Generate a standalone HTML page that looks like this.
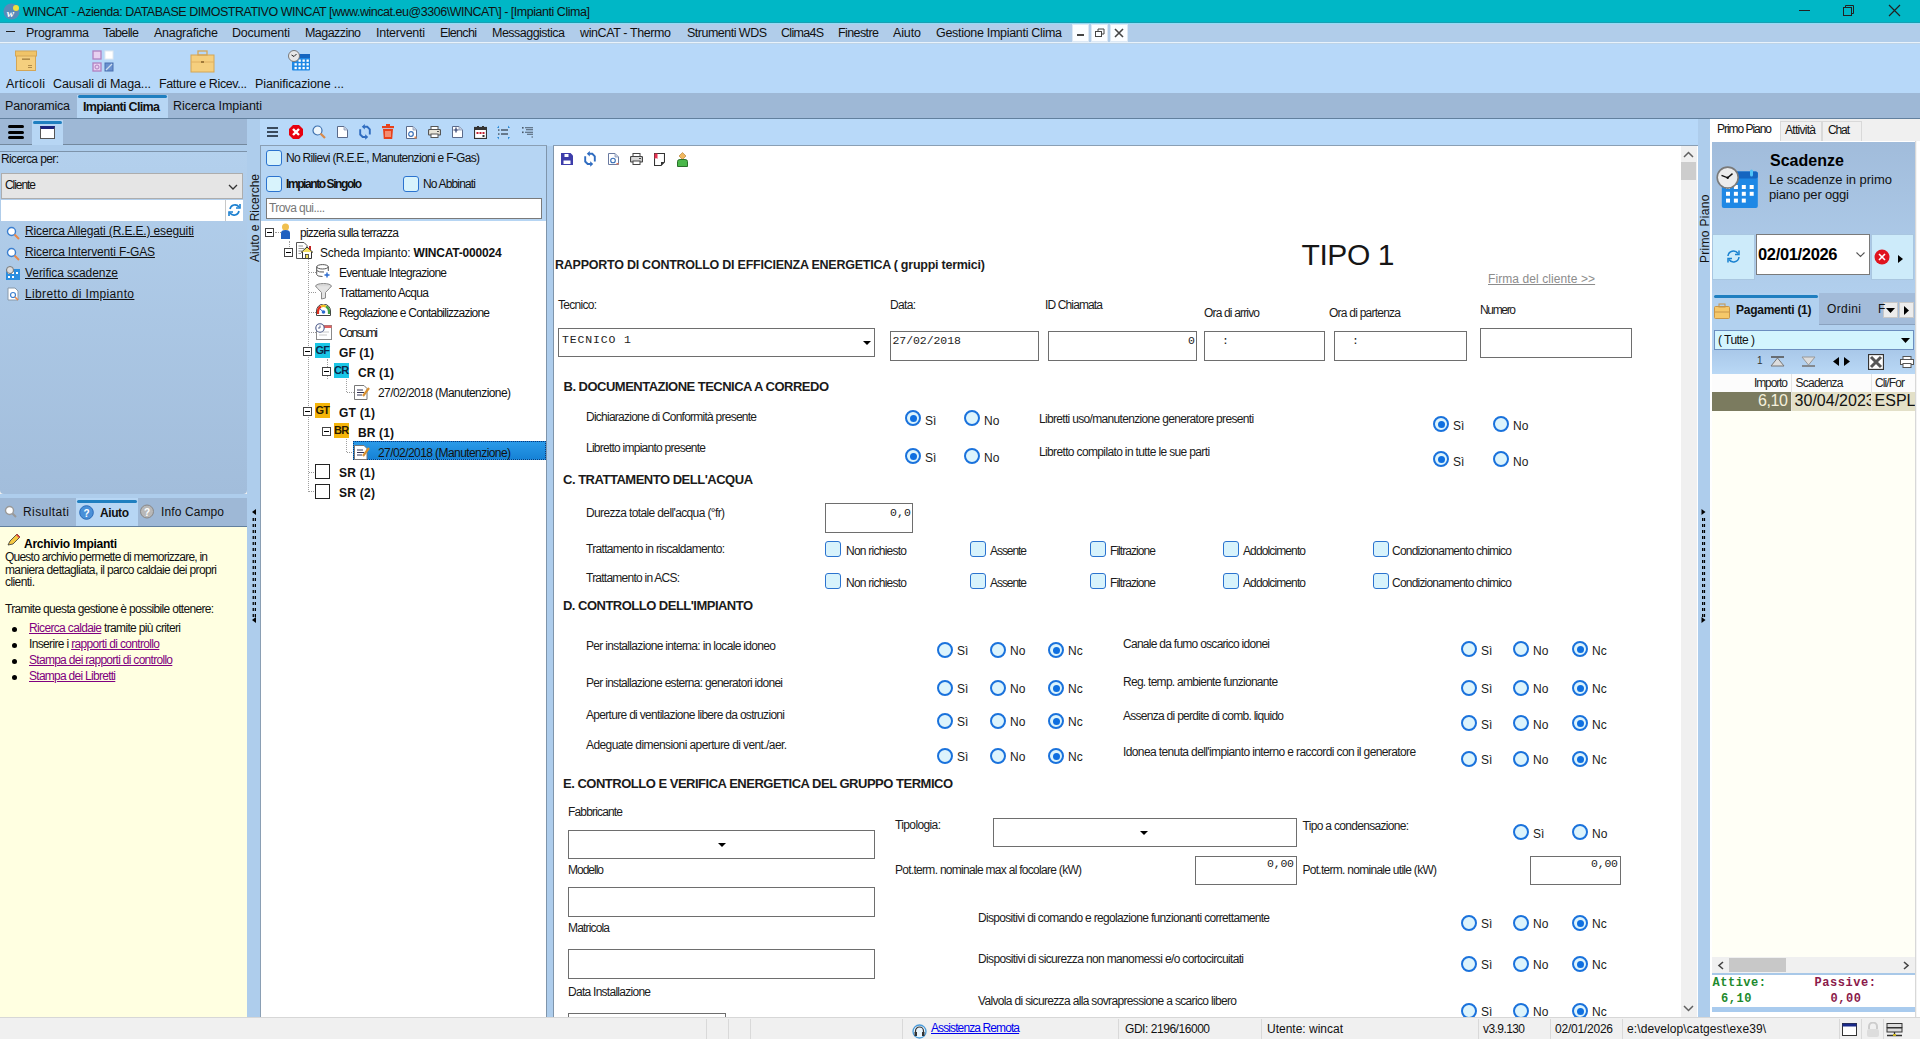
<!DOCTYPE html><html><head><meta charset="utf-8"><style>
html,body{margin:0;padding:0;width:1920px;height:1039px;overflow:hidden;background:#f0f0f0;position:relative;font-family:"Liberation Sans",sans-serif;}
.t{position:absolute;white-space:nowrap;line-height:0;color:#000;}
.r{position:absolute;box-sizing:border-box;}
</style></head><body>
<div class="r" style="left:0px;top:0px;width:1920px;height:22px;background:#00b7c6"></div>
<div class="r" style="left:0px;top:22px;width:1920px;height:20px;background:#b1cdea"></div>
<div class="r" style="left:0px;top:42px;width:1920px;height:1px;background:#e8f2fb"></div>
<div class="r" style="left:0px;top:22px;width:1920px;height:1px;background:#1a9fb2"></div>
<div class="r" style="left:0px;top:23px;width:1920px;height:1px;background:#94dcf6"></div>
<div class="r" style="left:0px;top:43px;width:1920px;height:50px;background:#b7d8f9"></div>
<div class="r" style="left:0px;top:43px;width:1920px;height:1px;background:#bdd4e8"></div>
<div class="r" style="left:0px;top:93px;width:1920px;height:25px;background:#9eb8d6"></div>
<div class="r" style="left:0px;top:118px;width:1920px;height:1px;background:#62809e"></div>
<div class="r" style="left:77px;top:95px;width:91px;height:23px;background:#b7d6f4"></div>
<div class="r" style="left:78px;top:95px;width:89px;height:3px;background:#1f7fc0;border-radius:2px"></div>
<div class="r" style="left:0px;top:119px;width:247px;height:26px;background:#9eb8d6"></div>
<div class="r" style="left:0px;top:144px;width:247px;height:1px;background:#73889d"></div>
<div class="r" style="left:0px;top:145px;width:247px;height:6px;background:#aecdec"></div>
<div class="r" style="left:0px;top:151px;width:247px;height:1px;background:#7d93aa"></div>
<div class="r" style="left:0px;top:152px;width:247px;height:342px;background:linear-gradient(#b3d0ed,#a2bddb);border-radius:0 0 4px 4px"></div>
<div class="r" style="left:0px;top:494px;width:247px;height:4px;background:#aecdec"></div>
<div class="r" style="left:0px;top:498px;width:247px;height:28px;background:#9eb8d6"></div>
<div class="r" style="left:0px;top:526px;width:247px;height:1px;background:#62809e"></div>
<div class="r" style="left:0px;top:527px;width:247px;height:490px;background:#ffffe1"></div>
<div class="r" style="left:32px;top:120px;width:31px;height:25px;background:#b7d6f4"></div>
<div class="r" style="left:33px;top:121px;width:29px;height:3px;background:#1f7fc0;border-radius:2px"></div>
<div class="r" style="left:76px;top:498px;width:62px;height:28px;background:#b7d6f4"></div>
<div class="r" style="left:77px;top:500px;width:60px;height:3px;background:#1f7fc0;border-radius:2px"></div>
<div class="r" style="left:247px;top:119px;width:13px;height:898px;background:#aecdec"></div>
<div class="r" style="left:260px;top:146px;width:1px;height:871px;background:#8a9fb4"></div>
<div class="r" style="left:260px;top:119px;width:1438px;height:27px;background:#b8d9f9"></div>
<div class="r" style="left:260px;top:145px;width:287px;height:1px;background:#8a9fb4"></div>
<div class="r" style="left:261px;top:146px;width:285px;height:75px;background:#b6d5f3"></div>
<div class="r" style="left:261px;top:221px;width:285px;height:796px;background:#fff"></div>
<div class="r" style="left:546px;top:146px;width:1px;height:871px;background:#7f95ab"></div>
<div class="r" style="left:547px;top:146px;width:6px;height:871px;background:#aecdec"></div>
<div class="r" style="left:553px;top:146px;width:1px;height:871px;background:#7f95ab"></div>
<div class="r" style="left:553px;top:145px;width:1145px;height:1px;background:#8a9fb4"></div>
<div class="r" style="left:554px;top:146px;width:1127px;height:871px;background:#fff"></div>
<div class="r" style="left:1681px;top:146px;width:16px;height:871px;background:#f0f0f0"></div>
<div class="r" style="left:1697px;top:146px;width:1px;height:871px;background:#fff"></div>
<div class="r" style="left:1681px;top:162px;width:15px;height:18px;background:#cdcdcd"></div>
<div class="r" style="left:1698px;top:119px;width:12px;height:898px;background:#aecdec"></div>
<div class="r" style="left:1710px;top:119px;width:210px;height:898px;background:#f0f0f0"></div>
<svg class="r" style="left:3px;top:3px" width="17" height="17" viewBox="0 0 17 17"><circle cx="8.5" cy="8.5" r="8" fill="#5a8ab8"/><circle cx="13" cy="5" r="3" fill="#f0e040"/><text x="7.5" y="14" font-size="11" font-weight="bold" fill="#fff" text-anchor="middle" font-family="Liberation Serif" font-style="italic">w</text></svg>
<div class="r" style="left:1799px;top:10px;width:11px;height:1px;background:#222"></div>
<svg class="r" style="left:1843px;top:5px" width="12" height="12" viewBox="0 0 12 12"><rect x="0.5" y="2.5" width="8" height="8" fill="none" stroke="#222"/><path d="M2.5 2.5V0.5H10.5V8.5H8.5" fill="none" stroke="#222"/></svg>
<svg class="r" style="left:1888px;top:4px" width="13" height="13" viewBox="0 0 13 13"><path d="M1 1L12 12M12 1L1 12" stroke="#222" stroke-width="1.2"/></svg>
<div class="r" style="left:6px;top:31px;width:9px;height:1.3px;background:#222"></div>
<div class="r" style="left:1072px;top:24px;width:17px;height:18px;background:#fbfdff;border:1px solid #dce8f4"></div>
<div class="r" style="left:1091px;top:24px;width:17px;height:18px;background:#fbfdff;border:1px solid #dce8f4"></div>
<div class="r" style="left:1110px;top:24px;width:18px;height:18px;background:#fbfdff;border:1px solid #dce8f4"></div>
<div class="r" style="left:1077px;top:34px;width:7px;height:2px;background:#444"></div>
<svg class="r" style="left:1095px;top:28px" width="10" height="10" viewBox="0 0 10 10"><rect x="0.5" y="3.5" width="6" height="5" fill="none" stroke="#444"/><path d="M3 3.5V1H9V6H6.5" fill="none" stroke="#444"/></svg>
<svg class="r" style="left:1114px;top:28px" width="10" height="10" viewBox="0 0 10 10"><path d="M1 1L9 9M9 1L1 9" stroke="#444" stroke-width="1.6"/></svg>
<svg class="r" style="left:15px;top:50px" width="22" height="21" viewBox="0 0 22 21"><rect x="1.5" y="5.5" width="19" height="15" fill="#f5cf7e" stroke="#d4a656"/><rect x="0.5" y="1" width="21" height="5" fill="#f0c468" stroke="#d4a656"/><rect x="7" y="8.5" width="8" height="1.3" fill="#a07a3a"/><path d="M13 15.5H17M13 17.5H17" stroke="#a07a3a" stroke-width="0.8"/></svg>
<svg class="r" style="left:92px;top:50px" width="23" height="23" viewBox="0 0 23 23"><rect x="1" y="1" width="8" height="8" fill="#e8d0f0" stroke="#b080c0" stroke-width="1.3"/><rect x="13" y="1" width="8" height="8" fill="#fff" stroke="#e0e8f0"/><rect x="1" y="13" width="8" height="8" fill="#e8d0f0" stroke="#b080c0" stroke-width="1.3"/><circle cx="5" cy="17" r="2" fill="none" stroke="#b080c0"/><rect x="13" y="13" width="8" height="8" fill="#6a90d0" stroke="#4a70b0"/><path d="M14 20L20 14" stroke="#cde" stroke-width="1.2"/></svg>
<svg class="r" style="left:190px;top:50px" width="25" height="23" viewBox="0 0 25 23"><rect x="1" y="5" width="23" height="17" fill="#f5cf7e" stroke="#d4a656"/><rect x="8" y="1" width="9" height="4" fill="none" stroke="#d4a656" stroke-width="1.3"/><path d="M1 12H24" stroke="#e0b060"/><rect x="11" y="11" width="3" height="2" fill="#a07a3a"/></svg>
<svg class="r" style="left:288px;top:50px" width="24" height="23" viewBox="0 0 24 23"><rect x="4" y="4" width="18" height="16.5" rx="1" fill="#1e88e5"/><rect x="4" y="4" width="18" height="4" fill="#1565c0"/><rect x="10.5" y="9.5" width="2.3" height="2.3" fill="#fff"/><rect x="14.5" y="9.5" width="2.3" height="2.3" fill="#fff"/><rect x="18.5" y="9.5" width="2.3" height="2.3" fill="#fff"/><rect x="6.5" y="13.2" width="2.3" height="2.3" fill="#fff"/><rect x="10.5" y="13.2" width="2.3" height="2.3" fill="#fff"/><rect x="14.5" y="13.2" width="2.3" height="2.3" fill="#fff"/><rect x="18.5" y="13.2" width="2.3" height="2.3" fill="#fff"/><rect x="6.5" y="16.9" width="2.3" height="2.3" fill="#fff"/><rect x="10.5" y="16.9" width="2.3" height="2.3" fill="#fff"/><rect x="14.5" y="16.9" width="2.3" height="2.3" fill="#fff"/><rect x="18.5" y="16.9" width="2.3" height="2.3" fill="#fff"/><circle cx="6" cy="6" r="5.5" fill="#e8e8e8" stroke="#777" stroke-width="1"/><path d="M3.5 5L6 6.5L8.5 4" stroke="#222" stroke-width="1" fill="none"/></svg>
<div class="r" style="left:1px;top:173px;width:242px;height:26px;border:1px solid #adadad;background:#e5e5e5"></div>
<svg class="r" style="left:228px;top:184px" width="10" height="6" viewBox="0 0 10 6"><path d="M1 1L5 5L9 1" stroke="#333" stroke-width="1.3" fill="none"/></svg>
<div class="r" style="left:1px;top:200px;width:224px;height:21px;border:1px solid #ffffff;background:#fff"></div>
<div class="r" style="left:225px;top:200px;width:18px;height:21px;background:#fff;border-left:1px solid #c8c8c8"></div>
<svg class="r" style="left:227px;top:202px" width="15" height="16" viewBox="0 0 15 16"><path d="M3 7A5 5 0 0 1 12 5" stroke="#1a7fd0" stroke-width="1.6" fill="none"/><path d="M13 2V6H9" stroke="#1a7fd0" stroke-width="1.6" fill="none"/><path d="M12 9A5 5 0 0 1 3 11" stroke="#1a7fd0" stroke-width="1.6" fill="none"/><path d="M2 14V10H6" stroke="#1a7fd0" stroke-width="1.6" fill="none"/></svg>
<svg class="r" style="left:6px;top:226px" width="14" height="14" viewBox="0 0 14 14"><circle cx="5.5" cy="5.5" r="4" fill="#fff" stroke="#3b7fd0" stroke-width="1.4"/><path d="M8.5 8.5L13 13" stroke="#e8884a" stroke-width="2"/></svg>
<svg class="r" style="left:6px;top:247px" width="14" height="14" viewBox="0 0 14 14"><circle cx="5.5" cy="5.5" r="4" fill="#fff" stroke="#3b7fd0" stroke-width="1.4"/><path d="M8.5 8.5L13 13" stroke="#e8884a" stroke-width="2"/></svg>
<svg class="r" style="left:6px;top:266px" width="14" height="14" viewBox="0 0 14 14"><rect x="0" y="3" width="14" height="11" fill="#2a8ee0"/><rect x="2" y="6" width="2" height="2" fill="#fff"/><rect x="6" y="6" width="2" height="2" fill="#fff"/><rect x="10" y="6" width="2" height="2" fill="#fff"/><rect x="2" y="10" width="2" height="2" fill="#fff"/><rect x="6" y="10" width="2" height="2" fill="#fff"/><circle cx="4" cy="4" r="3.5" fill="#ddd" stroke="#777"/></svg>
<svg class="r" style="left:7px;top:287px" width="13" height="14" viewBox="0 0 13 14"><path d="M1 1H8L11 4V13H1Z" fill="#fff" stroke="#8899aa"/><circle cx="6" cy="8" r="2.5" fill="none" stroke="#3b7fd0" stroke-width="1.2"/><path d="M8 10L11 13" stroke="#e8884a" stroke-width="1.6"/></svg>
<div class="r" style="left:8px;top:125px;width:16px;height:3px;background:#000;border-radius:1.5px"></div>
<div class="r" style="left:8px;top:130.5px;width:16px;height:3px;background:#000;border-radius:1.5px"></div>
<div class="r" style="left:8px;top:136px;width:16px;height:3px;background:#000;border-radius:1.5px"></div>
<div class="r" style="left:40px;top:126px;width:15px;height:13px;border:1px solid #555;background:#fff;border-top:3px solid #1a237e"></div>
<svg class="r" style="left:4px;top:505px" width="13" height="14" viewBox="0 0 13 14"><circle cx="5.5" cy="5.5" r="4" fill="#fff" stroke="#999" stroke-width="1.4"/><path d="M8.5 8.5L12 12" stroke="#999" stroke-width="2"/></svg>
<svg class="r" style="left:79px;top:505px" width="15" height="15" viewBox="0 0 15 15"><circle cx="7.5" cy="7.5" r="6.8" fill="#4a90d8" stroke="#2a6ab8"/><text x="7.5" y="11.5" font-size="10" font-weight="bold" fill="#fff" text-anchor="middle" font-family="Liberation Sans">?</text></svg>
<svg class="r" style="left:140px;top:504px" width="14" height="15" viewBox="0 0 14 15"><circle cx="7" cy="7.5" r="6.5" fill="#b8b8b8" stroke="#888"/><text x="7" y="11.5" font-size="10" font-weight="bold" fill="#fff" text-anchor="middle" font-family="Liberation Sans">?</text></svg>
<svg class="r" style="left:6px;top:533px" width="15" height="14" viewBox="0 0 15 14"><path d="M2 12L4 8L11 1L14 4L7 11Z" fill="#f5c842" stroke="#333" stroke-width="0.8"/><path d="M11 1L14 4L13 5L10 2Z" fill="#e04040"/></svg>
<svg class="r" style="left:251px;top:507px" width="6" height="118" viewBox="0 0 6 118"><path d="M5 2L1 5L5 8Z" fill="#000"/><rect x="1.6" y="11" width="1.3" height="3" fill="#000"/><rect x="3.7" y="11" width="1.3" height="3" fill="#000"/><rect x="1.6" y="17" width="1.3" height="3" fill="#000"/><rect x="3.7" y="17" width="1.3" height="3" fill="#000"/><rect x="1.6" y="23" width="1.3" height="3" fill="#000"/><rect x="3.7" y="23" width="1.3" height="3" fill="#000"/><rect x="1.6" y="29" width="1.3" height="3" fill="#000"/><rect x="3.7" y="29" width="1.3" height="3" fill="#000"/><rect x="1.6" y="35" width="1.3" height="3" fill="#000"/><rect x="3.7" y="35" width="1.3" height="3" fill="#000"/><rect x="1.6" y="41" width="1.3" height="3" fill="#000"/><rect x="3.7" y="41" width="1.3" height="3" fill="#000"/><rect x="1.6" y="47" width="1.3" height="3" fill="#000"/><rect x="3.7" y="47" width="1.3" height="3" fill="#000"/><rect x="1.6" y="53" width="1.3" height="3" fill="#000"/><rect x="3.7" y="53" width="1.3" height="3" fill="#000"/><rect x="1.6" y="59" width="1.3" height="3" fill="#000"/><rect x="3.7" y="59" width="1.3" height="3" fill="#000"/><rect x="1.6" y="65" width="1.3" height="3" fill="#000"/><rect x="3.7" y="65" width="1.3" height="3" fill="#000"/><rect x="1.6" y="71" width="1.3" height="3" fill="#000"/><rect x="3.7" y="71" width="1.3" height="3" fill="#000"/><rect x="1.6" y="77" width="1.3" height="3" fill="#000"/><rect x="3.7" y="77" width="1.3" height="3" fill="#000"/><rect x="1.6" y="83" width="1.3" height="3" fill="#000"/><rect x="3.7" y="83" width="1.3" height="3" fill="#000"/><rect x="1.6" y="89" width="1.3" height="3" fill="#000"/><rect x="3.7" y="89" width="1.3" height="3" fill="#000"/><rect x="1.6" y="95" width="1.3" height="3" fill="#000"/><rect x="3.7" y="95" width="1.3" height="3" fill="#000"/><rect x="1.6" y="101" width="1.3" height="3" fill="#000"/><rect x="3.7" y="101" width="1.3" height="3" fill="#000"/><rect x="1.6" y="107" width="1.3" height="3" fill="#000"/><rect x="3.7" y="107" width="1.3" height="3" fill="#000"/><path d="M5 110L1 113L5 116Z" fill="#000"/></svg>
<div class="t" style="left:255px;top:262px;font-size:12px;color:#111;transform:rotate(-90deg);transform-origin:0 0;letter-spacing:0px">Aiuto e Ricerche</div>
<div class="r" style="left:266px;top:150px;width:16px;height:16px;border:1.6px solid #2b73cf;border-radius:3px;background:#d8f3fc"></div>
<div class="r" style="left:266px;top:176px;width:16px;height:16px;border:1.6px solid #2b73cf;border-radius:3px;background:#d8f3fc"></div>
<div class="r" style="left:403px;top:176px;width:16px;height:16px;border:1.6px solid #2b73cf;border-radius:3px;background:#d8f3fc"></div>
<div class="r" style="left:266px;top:198px;width:276px;height:21px;border:1px solid #7a7a7a;background:#fff"></div>
<div class="r" style="left:267px;top:127px;width:11px;height:2px;background:#3a4a5c"></div>
<div class="r" style="left:267px;top:131px;width:11px;height:2px;background:#3a4a5c"></div>
<div class="r" style="left:267px;top:135px;width:11px;height:2px;background:#3a4a5c"></div>
<svg class="r" style="left:289px;top:125px" width="14" height="14" viewBox="0 0 14 14"><path d="M4 0H10L14 4V10L10 14H4L0 10V4Z" fill="#e8000e"/><path d="M4 4L10 10M10 4L4 10" stroke="#fff" stroke-width="2.4"/></svg>
<svg class="r" style="left:312px;top:125px" width="14" height="14" viewBox="0 0 14 14"><circle cx="5.5" cy="5.5" r="4.5" fill="#eef6fc" stroke="#3b6fae" stroke-width="1.2"/><path d="M8.5 8.5L13 13" stroke="#d88a4a" stroke-width="2.2"/></svg>
<svg class="r" style="left:337px;top:126px" width="11" height="12" viewBox="0 0 11 12"><path d="M0.5 0.5H7L10.5 4V11.5H0.5Z" fill="#fff" stroke="#5a6a8a"/><path d="M7 0.5V4H10.5" fill="#c8d0e0" stroke="#8a9ab8" stroke-width="0.8"/></svg>
<svg class="r" style="left:358px;top:123px" width="14" height="18" viewBox="0 0 14 18"><path d="M11.8 11.5V6.3L9.3 3.8H6.2M2.2 6.3V11.5L4.7 14H7.8" stroke="#2f6cc0" stroke-width="1.9" fill="none"/><path d="M3.8 3.8L6.8 1V6.6Z M10.2 14L7.2 11.2V16.8Z" fill="#2f6cc0"/></svg>
<svg class="r" style="left:382px;top:124px" width="12" height="15" viewBox="0 0 12 15"><rect x="4" y="0" width="4" height="2" fill="#e8401a"/><rect x="0" y="2" width="12" height="2.2" fill="#e8401a"/><path d="M1 5H11L10.2 15H1.8Z" fill="#e8401a"/><path d="M4 7V13M6 7V13M8 7V13" stroke="#ffd8c8" stroke-width="1"/></svg>
<svg class="r" style="left:406px;top:126px" width="11" height="13" viewBox="0 0 11 13"><path d="M0.5 0.5H7L10.5 4V12.5H0.5Z" fill="#fff" stroke="#5a6a8a"/><path d="M7 0.5V4H10.5" fill="#c8d0e0" stroke="#8a9ab8" stroke-width="0.8"/><circle cx="5" cy="8" r="2.3" fill="none" stroke="#3a70b8" stroke-width="1.2"/><rect x="8.5" y="10.5" width="2" height="2" fill="#e8884a"/></svg>
<svg class="r" style="left:428px;top:126px" width="13" height="12" viewBox="0 0 13 12"><rect x="3" y="0.5" width="7" height="3" fill="#fff" stroke="#555"/><rect x="0.5" y="3.5" width="12" height="5.5" rx="1" fill="#e8e4d8" stroke="#555" stroke-width="1.2"/><rect x="3" y="8" width="7" height="3.5" fill="#fff" stroke="#555"/><rect x="9" y="5" width="2" height="1" fill="#555"/></svg>
<svg class="r" style="left:452px;top:126px" width="11" height="12" viewBox="0 0 11 12"><path d="M0.5 0.5H7L10.5 4V11.5H0.5Z" fill="#fff" stroke="#5a6a8a"/><path d="M7 0.5V4H10.5" fill="#c8d0e0" stroke="#8a9ab8" stroke-width="0.8"/><path d="M1.5 4H6.5M4 1.5V6.5" stroke="#2a3a6a" stroke-width="1.2"/></svg>
<svg class="r" style="left:474px;top:126px" width="13" height="13" viewBox="0 0 13 13"><rect x="0.5" y="1.5" width="12" height="11" fill="#fff" stroke="#333" stroke-width="1.2"/><rect x="0.5" y="1.5" width="12" height="2.5" fill="#333"/><rect x="3" y="0" width="2" height="2" fill="#333"/><rect x="8" y="0" width="2" height="2" fill="#333"/><rect x="2.5" y="6" width="2" height="2" fill="#c02030"/><rect x="5.5" y="6" width="2" height="2" fill="#c02030"/><rect x="8.5" y="6" width="2" height="2" fill="#c02030"/><rect x="8.5" y="9" width="2" height="2" fill="#333"/></svg>
<svg class="r" style="left:497px;top:125px" width="13" height="15" viewBox="0 0 13 15"><path d="M4 5H11M4 9H11" stroke="#4a5a6a" stroke-width="1.3"/><rect x="1" y="4.3" width="1.5" height="1.5" fill="#4a5a6a"/><rect x="1" y="8.3" width="1.5" height="1.5" fill="#4a5a6a"/><path d="M0 3L2 0.5L2 3Z M13 3L11 0.5L11 3Z M0 12L2 14.5L2 12Z M13 12L11 14.5L11 12Z" fill="#2a8ad8"/></svg>
<svg class="r" style="left:522px;top:125px" width="12" height="14" viewBox="0 0 12 14"><rect x="0" y="2" width="1.6" height="1.6" fill="#4a5a6a"/><rect x="0" y="6.5" width="1.6" height="1.6" fill="#4a5a6a"/><path d="M3 2.8H11M4 4.8H11M3 7.3H11M5 9.3H11M9.5 12H11" stroke="#4a5a6a" stroke-width="1.1"/></svg>
<div class="r" style="left:269px;top:237px;width:1px;height:0px;"></div>
<div class="r" style="left:265px;top:228px;width:9px;height:9px;border:1px solid #444;background:#fff"></div>
<div class="r" style="left:267px;top:232px;width:5px;height:1px;background:#000"></div>
<div class="r" style="left:275px;top:232px;width:6px;height:1px;border-top:1px dotted #999"></div>
<svg class="r" style="left:280px;top:223px" width="11" height="17" viewBox="0 0 11 17"><circle cx="5.5" cy="4" r="3.5" fill="#f0c050"/><path d="M1 16V10Q1 7 5.5 7Q10 7 10 10V16Z" fill="#2060c0"/></svg>
<div class="r" style="left:289px;top:241px;width:1px;height:8px;border-left:1px dotted #a0a0a0"></div>
<div class="r" style="left:284px;top:248px;width:9px;height:9px;border:1px solid #444;background:#fff"></div>
<div class="r" style="left:286px;top:252px;width:5px;height:1px;background:#000"></div>
<svg class="r" style="left:296px;top:242px" width="17" height="17" viewBox="0 0 17 17"><path d="M0.5 0.5H8L11 3.5V16.5H0.5Z" fill="#fff" stroke="#555"/><path d="M2.5 4H7M2.5 6.5H8M2.5 9H6M2.5 11.5H5" stroke="#888" stroke-width="0.9"/><path d="M5 10.5L11 5L17 10.5" fill="#f4e060" stroke="#333" stroke-width="1"/><path d="M6.5 10V16.5H15.5V10" fill="#fff" stroke="#333" stroke-width="1"/><rect x="9.5" y="12.5" width="3" height="4" fill="#f4e060" stroke="#333" stroke-width="0.8"/><rect x="13" y="4" width="2" height="4" fill="#c02020"/></svg>
<div class="r" style="left:308px;top:259px;width:1px;height:233px;border-left:1px dotted #a0a0a0"></div>
<div class="r" style="left:309px;top:272px;width:7px;height:1px;border-top:1px dotted #999"></div>
<div class="r" style="left:309px;top:292px;width:7px;height:1px;border-top:1px dotted #999"></div>
<div class="r" style="left:309px;top:312px;width:7px;height:1px;border-top:1px dotted #999"></div>
<div class="r" style="left:309px;top:332px;width:7px;height:1px;border-top:1px dotted #999"></div>
<div class="r" style="left:309px;top:472px;width:7px;height:1px;border-top:1px dotted #999"></div>
<div class="r" style="left:309px;top:491px;width:7px;height:1px;border-top:1px dotted #999"></div>
<svg class="r" style="left:316px;top:264px" width="14" height="14" viewBox="0 0 14 14"><ellipse cx="6.5" cy="2.8" rx="5.8" ry="2.2" fill="#fff" stroke="#555"/><path d="M0.7 2.8V10.5Q0.7 12.5 6.5 12.5" fill="none" stroke="#555"/><path d="M12.3 2.8V7" stroke="#555"/><path d="M0.7 6.5Q3 8.5 8 8" stroke="#555" fill="none"/><path d="M8.5 11H13.5M11 8.5V13.5" stroke="#2a6ad0" stroke-width="1.4"/></svg>
<svg class="r" style="left:315px;top:283px" width="17" height="17" viewBox="0 0 17 17"><ellipse cx="8.5" cy="3" rx="7.8" ry="2.5" fill="#d8d8d8" stroke="#8a8a8a"/><path d="M0.7 3.2Q2 5 6.5 9.5V16L10.5 15V9.5Q15 5 16.3 3.2" fill="#e4e4e4" stroke="#8a8a8a"/></svg>
<svg class="r" style="left:316px;top:304px" width="15" height="12" viewBox="0 0 15 12"><path d="M0.5 11.5V7A7 7 0 0 1 14.5 7V11.5Z" fill="#fff" stroke="#444"/><path d="M2 10V7.5A5.5 5.5 0 0 1 5 2.5" stroke="#e03020" stroke-width="2.2" fill="none"/><path d="M5 2.5A5.5 5.5 0 0 1 10 2.5" stroke="#f0c020" stroke-width="2.2" fill="none"/><path d="M10 2.5A5.5 5.5 0 0 1 13 7.5V10" stroke="#40a040" stroke-width="2.2" fill="none"/><circle cx="7.5" cy="8" r="1.8" fill="#2a6ad0"/><path d="M7.5 8L4 5" stroke="#2a6ad0" stroke-width="1"/></svg>
<svg class="r" style="left:315px;top:323px" width="17" height="17" viewBox="0 0 17 17"><rect x="1.5" y="2.5" width="15" height="14" fill="#fff" stroke="#8a8a8a"/><rect x="1.5" y="2.5" width="15" height="2.5" fill="#e06060"/><path d="M4 9H14M4 12H12" stroke="#c8c8c8"/><circle cx="5" cy="5" r="4.2" fill="#fff" stroke="#4a5a8a" stroke-width="1.1"/><path d="M5 2.5V5H3" stroke="#4a5a8a" stroke-width="0.9" fill="none"/></svg>
<div class="r" style="left:303px;top:347px;width:9px;height:9px;border:1px solid #444;background:#fff"></div>
<div class="r" style="left:305px;top:351px;width:5px;height:1px;background:#000"></div>
<div class="r" style="left:315px;top:343px;width:15px;height:15px;background:#1ac6e6"></div>
<div class="t" style="left:315.5px;top:350px;font-size:11px;font-weight:bold;color:#0a2a4a;letter-spacing:-0.8px">GF</div>
<div class="r" style="left:327px;top:359px;width:1px;height:20px;border-left:1px dotted #a0a0a0"></div>
<div class="r" style="left:322px;top:367px;width:9px;height:9px;border:1px solid #444;background:#fff"></div>
<div class="r" style="left:324px;top:371px;width:5px;height:1px;background:#000"></div>
<div class="r" style="left:334px;top:363px;width:15px;height:15px;background:#1ac6e6"></div>
<div class="t" style="left:334px;top:370px;font-size:11px;font-weight:bold;color:#0a2a4a;letter-spacing:-0.8px">CR</div>
<div class="r" style="left:346px;top:379px;width:1px;height:13px;border-left:1px dotted #a0a0a0"></div>
<div class="r" style="left:347px;top:392px;width:7px;height:1px;border-top:1px dotted #999"></div>
<svg class="r" style="left:354px;top:384px" width="16" height="16" viewBox="0 0 16 16"><path d="M0.5 1.5H10L13 4.5V15.5H0.5Z" fill="#fff" stroke="#777"/><path d="M3 6H9M3 8.5H10M3 11H8" stroke="#335" stroke-width="1"/><path d="M9 12L15 4" stroke="#d89030" stroke-width="2.2"/></svg>
<div class="r" style="left:303px;top:407px;width:9px;height:9px;border:1px solid #444;background:#fff"></div>
<div class="r" style="left:305px;top:411px;width:5px;height:1px;background:#000"></div>
<div class="r" style="left:315px;top:403px;width:15px;height:15px;background:#f5b50a"></div>
<div class="t" style="left:315.5px;top:410px;font-size:11px;font-weight:bold;color:#2a1a00;letter-spacing:-0.8px">GT</div>
<div class="r" style="left:322px;top:427px;width:9px;height:9px;border:1px solid #444;background:#fff"></div>
<div class="r" style="left:324px;top:431px;width:5px;height:1px;background:#000"></div>
<div class="r" style="left:334px;top:423px;width:15px;height:15px;background:#f5b50a"></div>
<div class="t" style="left:334px;top:430px;font-size:11px;font-weight:bold;color:#2a1a00;letter-spacing:-0.8px">BR</div>
<div class="r" style="left:346px;top:439px;width:1px;height:13px;border-left:1px dotted #a0a0a0"></div>
<div class="r" style="left:347px;top:452px;width:7px;height:1px;border-top:1px dotted #999"></div>
<div class="r" style="left:353px;top:441px;width:193px;height:19px;background:linear-gradient(#2a9ae8,#1682d6);border:1px dotted #0a3a7a"></div>
<svg class="r" style="left:354px;top:444px" width="16" height="16" viewBox="0 0 16 16"><path d="M0.5 1.5H10L13 4.5V15.5H0.5Z" fill="#fff" stroke="#777"/><path d="M3 6H9M3 8.5H10M3 11H8" stroke="#335" stroke-width="1"/><path d="M9 12L15 4" stroke="#d89030" stroke-width="2.2"/></svg>
<div class="r" style="left:315px;top:464px;width:15px;height:15px;border:1.5px solid #222;background:#fff"></div>
<div class="r" style="left:315px;top:484px;width:15px;height:15px;border:1.5px solid #222;background:#fff"></div>
<svg class="r" style="left:561px;top:153px" width="12" height="12" viewBox="0 0 12 12"><path d="M0 0H9.5L12 2.5V12H0Z" fill="#3d3daa"/><rect x="3.5" y="1" width="4" height="3" fill="#fff"/><rect x="2.5" y="7.5" width="7" height="3.5" fill="#fff"/></svg>
<svg class="r" style="left:583px;top:150px" width="14" height="18" viewBox="0 0 14 18"><path d="M11.8 11.5V6.3L9.3 3.8H6.2M2.2 6.3V11.5L4.7 14H7.8" stroke="#2f6cc0" stroke-width="1.9" fill="none"/><path d="M3.8 3.8L6.8 1V6.6Z M10.2 14L7.2 11.2V16.8Z" fill="#2f6cc0"/></svg>
<svg class="r" style="left:608px;top:153px" width="11" height="12" viewBox="0 0 11 12"><path d="M0.5 0.5H7L10.5 4V11.5H0.5Z" fill="#fff" stroke="#6a7aa0"/><path d="M7 0.5V4H10.5" fill="#c8d0e0" stroke="#8a9ab8" stroke-width="0.8"/><circle cx="5" cy="7.5" r="2.3" fill="none" stroke="#3a70b8" stroke-width="1.1"/><rect x="8.5" y="10" width="2" height="1.5" fill="#e87a5a"/></svg>
<svg class="r" style="left:630px;top:153px" width="13" height="12" viewBox="0 0 13 12"><rect x="3" y="0.5" width="7" height="3" fill="#fff" stroke="#444"/><rect x="0.5" y="3.5" width="12" height="5.5" rx="1" fill="#d8d8d8" stroke="#444" stroke-width="1.2"/><rect x="3" y="8" width="7" height="3.5" fill="#fff" stroke="#444"/><rect x="9" y="5" width="2" height="1" fill="#444"/></svg>
<svg class="r" style="left:654px;top:153px" width="11" height="13" viewBox="0 0 11 13"><path d="M0.5 0.5H10.5V9L7 12.5H0.5Z" fill="#fff" stroke="#333" stroke-width="1.1"/><path d="M10.5 9H7V12.5Z" fill="#333"/><path d="M0.5 0.5H3.5V6L2 5L0.5 6Z" fill="#e83050"/></svg>
<svg class="r" style="left:677px;top:152px" width="11" height="15" viewBox="0 0 11 15"><path d="M5.5 0.5L9 4L5.5 7.5L2 4Z" fill="#f0b860" stroke="#b07a30" stroke-width="0.6"/><path d="M0.5 14.5V9.5Q0.5 7.5 3 7.5H8Q10.5 7.5 10.5 9.5V14.5Z" fill="#4ab84a" stroke="#2a702a"/></svg>
<div class="r" style="left:558px;top:328px;width:317px;height:29px;border:1px solid #6e6e6e;background:#fff"></div>
<svg class="r" style="left:862.5px;top:341.0px" width="8" height="4" viewBox="0 0 8 4"><path d="M0 0H8L4.0 4Z" fill="#000"/></svg>
<div class="r" style="left:890px;top:331px;width:149px;height:30px;border:1px solid #6e6e6e;background:#fff"></div>
<div class="r" style="left:1048px;top:331px;width:149px;height:30px;border:1px solid #6e6e6e;background:#fff"></div>
<div class="r" style="left:1204px;top:331px;width:121px;height:30px;border:1px solid #6e6e6e;background:#fff"></div>
<div class="r" style="left:1334px;top:331px;width:133px;height:30px;border:1px solid #6e6e6e;background:#fff"></div>
<div class="r" style="left:1480px;top:328px;width:152px;height:30px;border:1px solid #6e6e6e;background:#fff"></div>
<div class="r" style="left:905px;top:410px;width:16px;height:16px;border:2px solid #1a72dc;border-radius:50%;background:#ddf4fc"></div>
<div class="r" style="left:909.5px;top:414.5px;width:7px;height:7px;border-radius:50%;background:#0f6fe0"></div>
<div class="r" style="left:964px;top:410px;width:16px;height:16px;border:2px solid #1a72dc;border-radius:50%;background:#ddf4fc"></div>
<div class="r" style="left:1433px;top:416px;width:16px;height:16px;border:2px solid #1a72dc;border-radius:50%;background:#ddf4fc"></div>
<div class="r" style="left:1437.5px;top:420.5px;width:7px;height:7px;border-radius:50%;background:#0f6fe0"></div>
<div class="r" style="left:1493px;top:416px;width:16px;height:16px;border:2px solid #1a72dc;border-radius:50%;background:#ddf4fc"></div>
<div class="r" style="left:905px;top:448px;width:16px;height:16px;border:2px solid #1a72dc;border-radius:50%;background:#ddf4fc"></div>
<div class="r" style="left:909.5px;top:452.5px;width:7px;height:7px;border-radius:50%;background:#0f6fe0"></div>
<div class="r" style="left:964px;top:448px;width:16px;height:16px;border:2px solid #1a72dc;border-radius:50%;background:#ddf4fc"></div>
<div class="r" style="left:1433px;top:451px;width:16px;height:16px;border:2px solid #1a72dc;border-radius:50%;background:#ddf4fc"></div>
<div class="r" style="left:1437.5px;top:455.5px;width:7px;height:7px;border-radius:50%;background:#0f6fe0"></div>
<div class="r" style="left:1493px;top:451px;width:16px;height:16px;border:2px solid #1a72dc;border-radius:50%;background:#ddf4fc"></div>
<div class="r" style="left:825px;top:503px;width:88px;height:30px;border:1px solid #6e6e6e;background:#fff"></div>
<div class="r" style="left:825px;top:541px;width:16px;height:16px;border:1.6px solid #2b73cf;border-radius:3px;background:#d8f3fc"></div>
<div class="r" style="left:970px;top:541px;width:16px;height:16px;border:1.6px solid #2b73cf;border-radius:3px;background:#d8f3fc"></div>
<div class="r" style="left:1090px;top:541px;width:16px;height:16px;border:1.6px solid #2b73cf;border-radius:3px;background:#d8f3fc"></div>
<div class="r" style="left:1223px;top:541px;width:16px;height:16px;border:1.6px solid #2b73cf;border-radius:3px;background:#d8f3fc"></div>
<div class="r" style="left:1373px;top:541px;width:16px;height:16px;border:1.6px solid #2b73cf;border-radius:3px;background:#d8f3fc"></div>
<div class="r" style="left:825px;top:573px;width:16px;height:16px;border:1.6px solid #2b73cf;border-radius:3px;background:#d8f3fc"></div>
<div class="r" style="left:970px;top:573px;width:16px;height:16px;border:1.6px solid #2b73cf;border-radius:3px;background:#d8f3fc"></div>
<div class="r" style="left:1090px;top:573px;width:16px;height:16px;border:1.6px solid #2b73cf;border-radius:3px;background:#d8f3fc"></div>
<div class="r" style="left:1223px;top:573px;width:16px;height:16px;border:1.6px solid #2b73cf;border-radius:3px;background:#d8f3fc"></div>
<div class="r" style="left:1373px;top:573px;width:16px;height:16px;border:1.6px solid #2b73cf;border-radius:3px;background:#d8f3fc"></div>
<div class="r" style="left:937px;top:642px;width:16px;height:16px;border:2px solid #1a72dc;border-radius:50%;background:#ddf4fc"></div>
<div class="r" style="left:990px;top:642px;width:16px;height:16px;border:2px solid #1a72dc;border-radius:50%;background:#ddf4fc"></div>
<div class="r" style="left:1048px;top:642px;width:16px;height:16px;border:2px solid #1a72dc;border-radius:50%;background:#ddf4fc"></div>
<div class="r" style="left:1052.5px;top:646.5px;width:7px;height:7px;border-radius:50%;background:#0f6fe0"></div>
<div class="r" style="left:937px;top:680px;width:16px;height:16px;border:2px solid #1a72dc;border-radius:50%;background:#ddf4fc"></div>
<div class="r" style="left:990px;top:680px;width:16px;height:16px;border:2px solid #1a72dc;border-radius:50%;background:#ddf4fc"></div>
<div class="r" style="left:1048px;top:680px;width:16px;height:16px;border:2px solid #1a72dc;border-radius:50%;background:#ddf4fc"></div>
<div class="r" style="left:1052.5px;top:684.5px;width:7px;height:7px;border-radius:50%;background:#0f6fe0"></div>
<div class="r" style="left:937px;top:713px;width:16px;height:16px;border:2px solid #1a72dc;border-radius:50%;background:#ddf4fc"></div>
<div class="r" style="left:990px;top:713px;width:16px;height:16px;border:2px solid #1a72dc;border-radius:50%;background:#ddf4fc"></div>
<div class="r" style="left:1048px;top:713px;width:16px;height:16px;border:2px solid #1a72dc;border-radius:50%;background:#ddf4fc"></div>
<div class="r" style="left:1052.5px;top:717.5px;width:7px;height:7px;border-radius:50%;background:#0f6fe0"></div>
<div class="r" style="left:937px;top:748px;width:16px;height:16px;border:2px solid #1a72dc;border-radius:50%;background:#ddf4fc"></div>
<div class="r" style="left:990px;top:748px;width:16px;height:16px;border:2px solid #1a72dc;border-radius:50%;background:#ddf4fc"></div>
<div class="r" style="left:1048px;top:748px;width:16px;height:16px;border:2px solid #1a72dc;border-radius:50%;background:#ddf4fc"></div>
<div class="r" style="left:1052.5px;top:752.5px;width:7px;height:7px;border-radius:50%;background:#0f6fe0"></div>
<div class="r" style="left:1461px;top:641px;width:16px;height:16px;border:2px solid #1a72dc;border-radius:50%;background:#ddf4fc"></div>
<div class="r" style="left:1513px;top:641px;width:16px;height:16px;border:2px solid #1a72dc;border-radius:50%;background:#ddf4fc"></div>
<div class="r" style="left:1572px;top:641px;width:16px;height:16px;border:2px solid #1a72dc;border-radius:50%;background:#ddf4fc"></div>
<div class="r" style="left:1576.5px;top:645.5px;width:7px;height:7px;border-radius:50%;background:#0f6fe0"></div>
<div class="r" style="left:1461px;top:680px;width:16px;height:16px;border:2px solid #1a72dc;border-radius:50%;background:#ddf4fc"></div>
<div class="r" style="left:1513px;top:680px;width:16px;height:16px;border:2px solid #1a72dc;border-radius:50%;background:#ddf4fc"></div>
<div class="r" style="left:1572px;top:680px;width:16px;height:16px;border:2px solid #1a72dc;border-radius:50%;background:#ddf4fc"></div>
<div class="r" style="left:1576.5px;top:684.5px;width:7px;height:7px;border-radius:50%;background:#0f6fe0"></div>
<div class="r" style="left:1461px;top:715px;width:16px;height:16px;border:2px solid #1a72dc;border-radius:50%;background:#ddf4fc"></div>
<div class="r" style="left:1513px;top:715px;width:16px;height:16px;border:2px solid #1a72dc;border-radius:50%;background:#ddf4fc"></div>
<div class="r" style="left:1572px;top:715px;width:16px;height:16px;border:2px solid #1a72dc;border-radius:50%;background:#ddf4fc"></div>
<div class="r" style="left:1576.5px;top:719.5px;width:7px;height:7px;border-radius:50%;background:#0f6fe0"></div>
<div class="r" style="left:1461px;top:751px;width:16px;height:16px;border:2px solid #1a72dc;border-radius:50%;background:#ddf4fc"></div>
<div class="r" style="left:1513px;top:751px;width:16px;height:16px;border:2px solid #1a72dc;border-radius:50%;background:#ddf4fc"></div>
<div class="r" style="left:1572px;top:751px;width:16px;height:16px;border:2px solid #1a72dc;border-radius:50%;background:#ddf4fc"></div>
<div class="r" style="left:1576.5px;top:755.5px;width:7px;height:7px;border-radius:50%;background:#0f6fe0"></div>
<div class="r" style="left:568px;top:830px;width:307px;height:29px;border:1px solid #6e6e6e;background:#fff"></div>
<svg class="r" style="left:717.5px;top:842.5px" width="8" height="4" viewBox="0 0 8 4"><path d="M0 0H8L4.0 4Z" fill="#000"/></svg>
<div class="r" style="left:568px;top:887px;width:307px;height:30px;border:1px solid #6e6e6e;background:#fff"></div>
<div class="r" style="left:568px;top:949px;width:307px;height:30px;border:1px solid #6e6e6e;background:#fff"></div>
<div class="r" style="left:568px;top:1013px;width:158px;height:17px;border:1px solid #6e6e6e;background:#fff"></div>
<div class="r" style="left:993px;top:818px;width:304px;height:29px;border:1px solid #6e6e6e;background:#fff"></div>
<svg class="r" style="left:1140.0px;top:831.0px" width="8" height="4" viewBox="0 0 8 4"><path d="M0 0H8L4.0 4Z" fill="#000"/></svg>
<div class="r" style="left:1513px;top:824px;width:16px;height:16px;border:2px solid #1a72dc;border-radius:50%;background:#ddf4fc"></div>
<div class="r" style="left:1572px;top:824px;width:16px;height:16px;border:2px solid #1a72dc;border-radius:50%;background:#ddf4fc"></div>
<div class="r" style="left:1195px;top:856px;width:102px;height:29px;border:1px solid #6e6e6e;background:#fff"></div>
<div class="r" style="left:1530px;top:856px;width:91px;height:29px;border:1px solid #6e6e6e;background:#fff"></div>
<div class="r" style="left:1461px;top:915px;width:16px;height:16px;border:2px solid #1a72dc;border-radius:50%;background:#ddf4fc"></div>
<div class="r" style="left:1513px;top:915px;width:16px;height:16px;border:2px solid #1a72dc;border-radius:50%;background:#ddf4fc"></div>
<div class="r" style="left:1572px;top:915px;width:16px;height:16px;border:2px solid #1a72dc;border-radius:50%;background:#ddf4fc"></div>
<div class="r" style="left:1576.5px;top:919.5px;width:7px;height:7px;border-radius:50%;background:#0f6fe0"></div>
<div class="r" style="left:1461px;top:956px;width:16px;height:16px;border:2px solid #1a72dc;border-radius:50%;background:#ddf4fc"></div>
<div class="r" style="left:1513px;top:956px;width:16px;height:16px;border:2px solid #1a72dc;border-radius:50%;background:#ddf4fc"></div>
<div class="r" style="left:1572px;top:956px;width:16px;height:16px;border:2px solid #1a72dc;border-radius:50%;background:#ddf4fc"></div>
<div class="r" style="left:1576.5px;top:960.5px;width:7px;height:7px;border-radius:50%;background:#0f6fe0"></div>
<div class="r" style="left:1461px;top:1003px;width:16px;height:16px;border:2px solid #1a72dc;border-radius:50%;background:#ddf4fc"></div>
<div class="r" style="left:1513px;top:1003px;width:16px;height:16px;border:2px solid #1a72dc;border-radius:50%;background:#ddf4fc"></div>
<div class="r" style="left:1572px;top:1003px;width:16px;height:16px;border:2px solid #1a72dc;border-radius:50%;background:#ddf4fc"></div>
<div class="r" style="left:1576.5px;top:1007.5px;width:7px;height:7px;border-radius:50%;background:#0f6fe0"></div>
<svg class="r" style="left:1683px;top:151px" width="11" height="8" viewBox="0 0 11 8"><path d="M1 6L5.5 1.5L10 6" stroke="#606060" stroke-width="1.5" fill="none"/></svg>
<svg class="r" style="left:1683px;top:1004px" width="11" height="8" viewBox="0 0 11 8"><path d="M1 2L5.5 6.5L10 2" stroke="#606060" stroke-width="1.5" fill="none"/></svg>
<svg class="r" style="left:1699px;top:507px" width="7" height="118" viewBox="0 0 7 118"><path d="M2.5 2L6.5 5L2.5 8Z" fill="#000"/><rect x="3" y="11" width="1.3" height="3" fill="#000"/><rect x="4.8" y="11" width="1.3" height="3" fill="#000"/><rect x="3" y="17" width="1.3" height="3" fill="#000"/><rect x="4.8" y="17" width="1.3" height="3" fill="#000"/><rect x="3" y="23" width="1.3" height="3" fill="#000"/><rect x="4.8" y="23" width="1.3" height="3" fill="#000"/><rect x="3" y="29" width="1.3" height="3" fill="#000"/><rect x="4.8" y="29" width="1.3" height="3" fill="#000"/><rect x="3" y="35" width="1.3" height="3" fill="#000"/><rect x="4.8" y="35" width="1.3" height="3" fill="#000"/><rect x="3" y="41" width="1.3" height="3" fill="#000"/><rect x="4.8" y="41" width="1.3" height="3" fill="#000"/><rect x="3" y="47" width="1.3" height="3" fill="#000"/><rect x="4.8" y="47" width="1.3" height="3" fill="#000"/><rect x="3" y="53" width="1.3" height="3" fill="#000"/><rect x="4.8" y="53" width="1.3" height="3" fill="#000"/><rect x="3" y="59" width="1.3" height="3" fill="#000"/><rect x="4.8" y="59" width="1.3" height="3" fill="#000"/><rect x="3" y="65" width="1.3" height="3" fill="#000"/><rect x="4.8" y="65" width="1.3" height="3" fill="#000"/><rect x="3" y="71" width="1.3" height="3" fill="#000"/><rect x="4.8" y="71" width="1.3" height="3" fill="#000"/><rect x="3" y="77" width="1.3" height="3" fill="#000"/><rect x="4.8" y="77" width="1.3" height="3" fill="#000"/><rect x="3" y="83" width="1.3" height="3" fill="#000"/><rect x="4.8" y="83" width="1.3" height="3" fill="#000"/><rect x="3" y="89" width="1.3" height="3" fill="#000"/><rect x="4.8" y="89" width="1.3" height="3" fill="#000"/><rect x="3" y="95" width="1.3" height="3" fill="#000"/><rect x="4.8" y="95" width="1.3" height="3" fill="#000"/><rect x="3" y="101" width="1.3" height="3" fill="#000"/><rect x="4.8" y="101" width="1.3" height="3" fill="#000"/><rect x="3" y="107" width="1.3" height="3" fill="#000"/><rect x="4.8" y="107" width="1.3" height="3" fill="#000"/><path d="M2.5 110L6.5 113L2.5 116Z" fill="#000"/></svg>
<div class="t" style="left:1704.5px;top:262.5px;font-size:12px;color:#111;transform:rotate(-90deg);transform-origin:0 0;letter-spacing:0.3px;z-index:3">Primo Piano</div>
<div class="t" style="left:23px;top:11.67px;font-size:12.5px;color:#111;letter-spacing:-0.474px;">WINCAT - Azienda: DATABASE DIMOSTRATIVO WINCAT [www.wincat.eu@3306\WINCAT\] - [Impianti Clima]</div>
<div class="t" style="left:26px;top:32.67px;font-size:12.5px;color:#111;letter-spacing:-0.285px;">Programma</div>
<div class="t" style="left:103px;top:32.67px;font-size:12.5px;color:#111;letter-spacing:-0.604px;">Tabelle</div>
<div class="t" style="left:154px;top:32.67px;font-size:12.5px;color:#111;letter-spacing:-0.272px;">Anagrafiche</div>
<div class="t" style="left:232px;top:32.67px;font-size:12.5px;color:#111;letter-spacing:-0.219px;">Documenti</div>
<div class="t" style="left:305px;top:32.67px;font-size:12.5px;color:#111;letter-spacing:-0.557px;">Magazzino</div>
<div class="t" style="left:376px;top:32.67px;font-size:12.5px;color:#111;letter-spacing:-0.267px;">Interventi</div>
<div class="t" style="left:440px;top:32.67px;font-size:12.5px;color:#111;letter-spacing:-0.669px;">Elenchi</div>
<div class="t" style="left:492px;top:32.67px;font-size:12.5px;color:#111;letter-spacing:-0.517px;">Messaggistica</div>
<div class="t" style="left:580px;top:32.67px;font-size:12.5px;color:#111;letter-spacing:-0.398px;">winCAT - Thermo</div>
<div class="t" style="left:687px;top:32.67px;font-size:12.5px;color:#111;letter-spacing:-0.510px;">Strumenti WDS</div>
<div class="t" style="left:781px;top:32.67px;font-size:12.5px;color:#111;letter-spacing:-0.708px;">Clima4S</div>
<div class="t" style="left:838px;top:32.67px;font-size:12.5px;color:#111;letter-spacing:-0.594px;">Finestre</div>
<div class="t" style="left:893px;top:32.67px;font-size:12.5px;color:#111;letter-spacing:-0.125px;">Aiuto</div>
<div class="t" style="left:936px;top:32.67px;font-size:12.5px;color:#111;letter-spacing:-0.304px;">Gestione Impianti Clima</div>
<div class="t" style="left:6px;top:83.67px;font-size:12.5px;color:#111;letter-spacing:0.212px;">Articoli</div>
<div class="t" style="left:53px;top:83.67px;font-size:12.5px;color:#111;letter-spacing:-0.120px;">Causali di Maga...</div>
<div class="t" style="left:159px;top:83.67px;font-size:12.5px;color:#111;letter-spacing:-0.367px;">Fatture e Ricev...</div>
<div class="t" style="left:255px;top:83.67px;font-size:12.5px;color:#111;letter-spacing:-0.119px;">Pianificazione ...</div>
<div class="t" style="left:5px;top:105.67px;font-size:12.5px;color:#111;letter-spacing:-0.189px;">Panoramica</div>
<div class="t" style="left:83px;top:106.67px;font-size:12.5px;font-weight:bold;color:#111;letter-spacing:-0.647px;">Impianti Clima</div>
<div class="t" style="left:173px;top:105.67px;font-size:12.5px;color:#111;letter-spacing:-0.041px;">Ricerca Impianti</div>
<div class="t" style="left:1px;top:158.84px;font-size:12px;color:#111;letter-spacing:-0.608px;">Ricerca per:</div>
<div class="t" style="left:5px;top:184.84px;font-size:12px;color:#111;letter-spacing:-1.060px;">Cliente</div>
<div class="t" style="left:25px;top:230.84px;font-size:12px;color:#111;text-decoration:underline;letter-spacing:-0.133px;">Ricerca Allegati (R.E.E.) eseguiti</div>
<div class="t" style="left:25px;top:251.84px;font-size:12px;color:#111;text-decoration:underline;letter-spacing:-0.145px;">Ricerca Interventi F-GAS</div>
<div class="t" style="left:25px;top:272.84px;font-size:12px;color:#111;text-decoration:underline;letter-spacing:-0.065px;">Verifica scadenze</div>
<div class="t" style="left:25px;top:293.84px;font-size:12px;color:#111;text-decoration:underline;letter-spacing:0.367px;">Libretto di Impianto</div>
<div class="t" style="left:23px;top:511.84px;font-size:12px;color:#111;letter-spacing:0.414px;">Risultati</div>
<div class="t" style="left:100px;top:512.84px;font-size:12px;font-weight:bold;color:#111;letter-spacing:-0.414px;">Aiuto</div>
<div class="t" style="left:161px;top:511.84px;font-size:12px;color:#111;letter-spacing:0.109px;">Info Campo</div>
<div class="t" style="left:24px;top:543.84px;font-size:12px;font-weight:bold;letter-spacing:-0.270px;">Archivio Impianti</div>
<div class="t" style="left:5px;top:556.84px;font-size:12px;color:#111;letter-spacing:-0.771px;">Questo archivio permette di memorizzare, in</div>
<div class="t" style="left:5px;top:569.84px;font-size:12px;color:#111;letter-spacing:-0.641px;">maniera dettagliata, il parco caldaie dei propri</div>
<div class="t" style="left:5px;top:581.84px;font-size:12px;color:#111;letter-spacing:-0.574px;">clienti.</div>
<div class="t" style="left:5px;top:608.84px;font-size:12px;color:#111;letter-spacing:-0.681px;">Tramite questa gestione è possibile ottenere:</div>
<div class="t" style="left:29px;top:627.84px;font-size:12px;color:#111;letter-spacing:-0.649px;"><span style="color:#800080;text-decoration:underline">Ricerca caldaie</span> tramite più criteri</div>
<div class="t" style="left:29px;top:643.84px;font-size:12px;color:#111;letter-spacing:-0.658px;">Inserire i <span style="color:#800080;text-decoration:underline">rapporti di controllo</span></div>
<div class="t" style="left:29px;top:659.84px;font-size:12px;color:#111;letter-spacing:-0.712px;"><span style="color:#800080;text-decoration:underline">Stampa dei rapporti di controllo</span></div>
<div class="t" style="left:29px;top:675.84px;font-size:12px;color:#111;letter-spacing:-0.724px;"><span style="color:#800080;text-decoration:underline">Stampa dei Libretti</span></div>
<div class="r" style="left:12px;top:627px;width:5px;height:5px;background:#000;border-radius:50%"></div>
<div class="r" style="left:12px;top:643px;width:5px;height:5px;background:#000;border-radius:50%"></div>
<div class="r" style="left:12px;top:659px;width:5px;height:5px;background:#000;border-radius:50%"></div>
<div class="r" style="left:12px;top:675px;width:5px;height:5px;background:#000;border-radius:50%"></div>
<div class="t" style="left:286px;top:157.84px;font-size:12px;color:#111;letter-spacing:-0.684px;">No Rilievi (R.E.E., Manutenzioni e F-Gas)</div>
<div class="t" style="left:286px;top:183.84px;font-size:12px;font-weight:bold;color:#111;letter-spacing:-1.419px;">Impianto Singolo</div>
<div class="t" style="left:423px;top:183.84px;font-size:12px;color:#111;letter-spacing:-0.838px;">No Abbinati</div>
<div class="t" style="left:269px;top:207.84px;font-size:12px;color:#777;letter-spacing:-0.574px;">Trova qui....</div>
<div class="t" style="left:300px;top:232.84px;font-size:12px;color:#111;letter-spacing:-0.775px;">pizzeria sulla terrazza</div>
<div class="t" style="left:320px;top:252.84px;font-size:12px;color:#111;letter-spacing:-0.190px;">Scheda Impianto: <span style="font-weight:bold">WINCAT-000024</span></div>
<div class="t" style="left:339px;top:272.84px;font-size:12px;color:#111;letter-spacing:-0.701px;">Eventuale Integrazione</div>
<div class="t" style="left:339px;top:292.84px;font-size:12px;color:#111;letter-spacing:-0.683px;">Trattamento Acqua</div>
<div class="t" style="left:339px;top:312.84px;font-size:12px;color:#111;letter-spacing:-0.770px;">Regolazione e Contabilizzazione</div>
<div class="t" style="left:339px;top:332.84px;font-size:12px;color:#111;letter-spacing:-1.393px;">Consumi</div>
<div class="t" style="left:339px;top:352.84px;font-size:12px;font-weight:bold;color:#111;letter-spacing:0.069px;">GF (1)</div>
<div class="t" style="left:358px;top:372.84px;font-size:12px;font-weight:bold;color:#111;letter-spacing:0.131px;">CR (1)</div>
<div class="t" style="left:378px;top:392.84px;font-size:12px;color:#111;letter-spacing:-0.572px;">27/02/2018 (Manutenzione)</div>
<div class="t" style="left:339px;top:412.84px;font-size:12px;font-weight:bold;color:#111;letter-spacing:0.269px;">GT (1)</div>
<div class="t" style="left:358px;top:432.84px;font-size:12px;font-weight:bold;color:#111;letter-spacing:0.131px;">BR (1)</div>
<div class="t" style="left:378px;top:452.84px;font-size:12px;color:#111;letter-spacing:-0.572px;">27/02/2018 (Manutenzione)</div>
<div class="t" style="left:339px;top:472.84px;font-size:12px;font-weight:bold;color:#111;letter-spacing:0.266px;">SR (1)</div>
<div class="t" style="left:339px;top:492.84px;font-size:12px;font-weight:bold;color:#111;letter-spacing:0.266px;">SR (2)</div>
<div class="t" style="left:555px;top:264.67px;font-size:12.5px;font-weight:bold;color:#1b1b1b;letter-spacing:-0.245px;">RAPPORTO DI CONTROLLO DI EFFICIENZA ENERGETICA ( gruppi termici)</div>
<div class="t" style="left:1301.5px;top:255.10px;font-size:30px;color:#161616;letter-spacing:-0.403px;">TIPO 1</div>
<div class="t" style="left:1488px;top:278.84px;font-size:12px;color:#8c8c8c;text-decoration:underline;letter-spacing:0.085px;">Firma del cliente &gt;&gt;</div>
<div class="t" style="left:558px;top:304.84px;font-size:12px;color:#1b1b1b;letter-spacing:-0.717px;">Tecnico:</div>
<div class="t" style="left:890px;top:304.84px;font-size:12px;color:#1b1b1b;letter-spacing:-0.668px;">Data:</div>
<div class="t" style="left:1045px;top:304.84px;font-size:12px;color:#1b1b1b;letter-spacing:-0.869px;">ID Chiamata</div>
<div class="t" style="left:1204px;top:312.84px;font-size:12px;color:#1b1b1b;letter-spacing:-0.835px;">Ora di arrivo</div>
<div class="t" style="left:1329px;top:312.84px;font-size:12px;color:#1b1b1b;letter-spacing:-0.763px;">Ora di partenza</div>
<div class="t" style="left:1480px;top:309.84px;font-size:12px;color:#1b1b1b;letter-spacing:-1.337px;">Numero</div>
<div class="t" style="left:562px;top:340.44px;font-size:11.5px;font-family:'Liberation Mono', monospace;color:#222;letter-spacing:0.855px;">TECNICO 1</div>
<div class="t" style="left:892.5px;top:341.44px;font-size:11.5px;font-family:'Liberation Mono', monospace;color:#222;letter-spacing:-0.062px;">27/02/2018</div>
<div class="t" style="left:1188px;top:340.94px;font-size:11.5px;font-family:'Liberation Mono', monospace;color:#222;">0</div>
<div class="t" style="left:1222px;top:340.94px;font-size:11.5px;font-family:'Liberation Mono', monospace;color:#222;">:</div>
<div class="t" style="left:1352px;top:340.94px;font-size:11.5px;font-family:'Liberation Mono', monospace;color:#222;">:</div>
<div class="t" style="left:563.5px;top:386.50px;font-size:13px;font-weight:bold;color:#1b1b1b;letter-spacing:-0.511px;">B. DOCUMENTAZIONE TECNICA A CORREDO</div>
<div class="t" style="left:586px;top:416.84px;font-size:12px;color:#1b1b1b;letter-spacing:-0.755px;">Dichiarazione di Conformità presente</div>
<div class="t" style="left:925px;top:420.84px;font-size:12px;color:#1b1b1b;">Sì</div>
<div class="t" style="left:984px;top:420.84px;font-size:12px;color:#1b1b1b;">No</div>
<div class="t" style="left:1039px;top:418.84px;font-size:12px;color:#1b1b1b;letter-spacing:-0.676px;">Libretti uso/manutenzione generatore presenti</div>
<div class="t" style="left:1453px;top:425.84px;font-size:12px;color:#1b1b1b;">Sì</div>
<div class="t" style="left:1513px;top:425.84px;font-size:12px;color:#1b1b1b;">No</div>
<div class="t" style="left:586px;top:447.84px;font-size:12px;color:#1b1b1b;letter-spacing:-0.749px;">Libretto impianto presente</div>
<div class="t" style="left:925px;top:458.34px;font-size:12px;color:#1b1b1b;">Sì</div>
<div class="t" style="left:984px;top:458.34px;font-size:12px;color:#1b1b1b;">No</div>
<div class="t" style="left:1039px;top:451.84px;font-size:12px;color:#1b1b1b;letter-spacing:-0.642px;">Libretto compilato in tutte le sue parti</div>
<div class="t" style="left:1453px;top:461.84px;font-size:12px;color:#1b1b1b;">Sì</div>
<div class="t" style="left:1513px;top:461.84px;font-size:12px;color:#1b1b1b;">No</div>
<div class="t" style="left:563px;top:480.00px;font-size:13px;font-weight:bold;color:#1b1b1b;letter-spacing:-0.486px;">C. TRATTAMENTO DELL&#x27;ACQUA</div>
<div class="t" style="left:586px;top:512.84px;font-size:12px;color:#1b1b1b;letter-spacing:-0.627px;">Durezza totale dell&#x27;acqua (°fr)</div>
<div class="t" style="left:890px;top:512.94px;font-size:11.5px;font-family:'Liberation Mono', monospace;color:#222;letter-spacing:0.141px;">0,0</div>
<div class="t" style="left:586px;top:549.34px;font-size:12px;color:#1b1b1b;letter-spacing:-0.688px;">Trattamento in riscaldamento:</div>
<div class="t" style="left:586px;top:577.84px;font-size:12px;color:#1b1b1b;letter-spacing:-0.754px;">Trattamento in ACS:</div>
<div class="t" style="left:846px;top:550.84px;font-size:12px;color:#1b1b1b;letter-spacing:-0.753px;">Non richiesto</div>
<div class="t" style="left:990px;top:550.84px;font-size:12px;color:#1b1b1b;letter-spacing:-1.057px;">Assente</div>
<div class="t" style="left:1110px;top:550.84px;font-size:12px;color:#1b1b1b;letter-spacing:-0.936px;">Filtrazione</div>
<div class="t" style="left:1243px;top:550.84px;font-size:12px;color:#1b1b1b;letter-spacing:-0.882px;">Addolcimento</div>
<div class="t" style="left:1392px;top:550.84px;font-size:12px;color:#1b1b1b;letter-spacing:-0.791px;">Condizionamento chimico</div>
<div class="t" style="left:846px;top:582.84px;font-size:12px;color:#1b1b1b;letter-spacing:-0.753px;">Non richiesto</div>
<div class="t" style="left:990px;top:582.84px;font-size:12px;color:#1b1b1b;letter-spacing:-1.057px;">Assente</div>
<div class="t" style="left:1110px;top:582.84px;font-size:12px;color:#1b1b1b;letter-spacing:-0.936px;">Filtrazione</div>
<div class="t" style="left:1243px;top:582.84px;font-size:12px;color:#1b1b1b;letter-spacing:-0.882px;">Addolcimento</div>
<div class="t" style="left:1392px;top:582.84px;font-size:12px;color:#1b1b1b;letter-spacing:-0.791px;">Condizionamento chimico</div>
<div class="t" style="left:563px;top:605.50px;font-size:13px;font-weight:bold;color:#1b1b1b;letter-spacing:-0.515px;">D. CONTROLLO DELL&#x27;IMPIANTO</div>
<div class="t" style="left:586px;top:646.34px;font-size:12px;color:#1b1b1b;letter-spacing:-0.669px;">Per installazione interna: in locale idoneo</div>
<div class="t" style="left:586px;top:682.84px;font-size:12px;color:#1b1b1b;letter-spacing:-0.708px;">Per installazione esterna: generatori idonei</div>
<div class="t" style="left:586px;top:715.34px;font-size:12px;color:#1b1b1b;letter-spacing:-0.692px;">Aperture di ventilazione libere da ostruzioni</div>
<div class="t" style="left:586px;top:744.84px;font-size:12px;color:#1b1b1b;letter-spacing:-0.596px;">Adeguate dimensioni aperture di vent./aer.</div>
<div class="t" style="left:957px;top:650.84px;font-size:12px;color:#1b1b1b;">Sì</div>
<div class="t" style="left:1010px;top:650.84px;font-size:12px;color:#1b1b1b;">No</div>
<div class="t" style="left:1068px;top:650.84px;font-size:12px;color:#1b1b1b;">Nc</div>
<div class="t" style="left:957px;top:688.84px;font-size:12px;color:#1b1b1b;">Sì</div>
<div class="t" style="left:1010px;top:688.84px;font-size:12px;color:#1b1b1b;">No</div>
<div class="t" style="left:1068px;top:688.84px;font-size:12px;color:#1b1b1b;">Nc</div>
<div class="t" style="left:957px;top:721.84px;font-size:12px;color:#1b1b1b;">Sì</div>
<div class="t" style="left:1010px;top:721.84px;font-size:12px;color:#1b1b1b;">No</div>
<div class="t" style="left:1068px;top:721.84px;font-size:12px;color:#1b1b1b;">Nc</div>
<div class="t" style="left:957px;top:756.84px;font-size:12px;color:#1b1b1b;">Sì</div>
<div class="t" style="left:1010px;top:756.84px;font-size:12px;color:#1b1b1b;">No</div>
<div class="t" style="left:1068px;top:756.84px;font-size:12px;color:#1b1b1b;">Nc</div>
<div class="t" style="left:1123px;top:643.84px;font-size:12px;color:#1b1b1b;letter-spacing:-0.727px;">Canale da fumo oscarico idonei</div>
<div class="t" style="left:1123px;top:681.84px;font-size:12px;color:#1b1b1b;letter-spacing:-0.724px;">Reg. temp. ambiente funzionante</div>
<div class="t" style="left:1123px;top:715.84px;font-size:12px;color:#1b1b1b;letter-spacing:-0.718px;">Assenza di perdite di comb. liquido</div>
<div class="t" style="left:1123px;top:751.84px;font-size:12px;color:#1b1b1b;letter-spacing:-0.615px;">Idonea tenuta dell&#x27;impianto interno e raccordi con il generatore</div>
<div class="t" style="left:1481px;top:650.84px;font-size:12px;color:#1b1b1b;">Sì</div>
<div class="t" style="left:1533px;top:650.84px;font-size:12px;color:#1b1b1b;">No</div>
<div class="t" style="left:1592px;top:650.84px;font-size:12px;color:#1b1b1b;">Nc</div>
<div class="t" style="left:1481px;top:688.84px;font-size:12px;color:#1b1b1b;">Sì</div>
<div class="t" style="left:1533px;top:688.84px;font-size:12px;color:#1b1b1b;">No</div>
<div class="t" style="left:1592px;top:688.84px;font-size:12px;color:#1b1b1b;">Nc</div>
<div class="t" style="left:1481px;top:724.84px;font-size:12px;color:#1b1b1b;">Sì</div>
<div class="t" style="left:1533px;top:724.84px;font-size:12px;color:#1b1b1b;">No</div>
<div class="t" style="left:1592px;top:724.84px;font-size:12px;color:#1b1b1b;">Nc</div>
<div class="t" style="left:1481px;top:760.34px;font-size:12px;color:#1b1b1b;">Sì</div>
<div class="t" style="left:1533px;top:760.34px;font-size:12px;color:#1b1b1b;">No</div>
<div class="t" style="left:1592px;top:760.34px;font-size:12px;color:#1b1b1b;">Nc</div>
<div class="t" style="left:563px;top:784.00px;font-size:13px;font-weight:bold;color:#1b1b1b;letter-spacing:-0.491px;">E. CONTROLLO E VERIFICA ENERGETICA DEL GRUPPO TERMICO</div>
<div class="t" style="left:568px;top:811.84px;font-size:12px;color:#1b1b1b;letter-spacing:-0.836px;">Fabbricante</div>
<div class="t" style="left:568px;top:869.84px;font-size:12px;color:#1b1b1b;letter-spacing:-1.005px;">Modello</div>
<div class="t" style="left:568px;top:927.84px;font-size:12px;color:#1b1b1b;letter-spacing:-0.836px;">Matricola</div>
<div class="t" style="left:568px;top:991.84px;font-size:12px;color:#1b1b1b;letter-spacing:-0.728px;">Data Installazione</div>
<div class="t" style="left:895px;top:824.84px;font-size:12px;color:#1b1b1b;letter-spacing:-0.622px;">Tipologia:</div>
<div class="t" style="left:1302.5px;top:825.84px;font-size:12px;color:#1b1b1b;letter-spacing:-0.689px;">Tipo a condensazione:</div>
<div class="t" style="left:1533px;top:833.84px;font-size:12px;color:#1b1b1b;">Sì</div>
<div class="t" style="left:1592px;top:833.84px;font-size:12px;color:#1b1b1b;">No</div>
<div class="t" style="left:895px;top:869.84px;font-size:12px;color:#1b1b1b;letter-spacing:-0.711px;">Pot.term. nominale max al focolare (kW)</div>
<div class="t" style="left:1267px;top:864.44px;font-size:11.5px;font-family:'Liberation Mono', monospace;color:#222;letter-spacing:-0.208px;">0,00</div>
<div class="t" style="left:1302.5px;top:869.84px;font-size:12px;color:#1b1b1b;letter-spacing:-0.721px;">Pot.term. nominale utile (kW)</div>
<div class="t" style="left:1591px;top:864.44px;font-size:11.5px;font-family:'Liberation Mono', monospace;color:#222;letter-spacing:-0.208px;">0,00</div>
<div class="t" style="left:978px;top:917.84px;font-size:12px;color:#1b1b1b;letter-spacing:-0.680px;">Dispositivi di comando e regolazione funzionanti correttamente</div>
<div class="t" style="left:978px;top:958.84px;font-size:12px;color:#1b1b1b;letter-spacing:-0.645px;">Dispositivi di sicurezza non manomessi e/o cortocircuitati</div>
<div class="t" style="left:978px;top:1000.84px;font-size:12px;color:#1b1b1b;letter-spacing:-0.659px;">Valvola di sicurezza alla sovrapressione a scarico libero</div>
<div class="t" style="left:1481px;top:923.84px;font-size:12px;color:#1b1b1b;">Sì</div>
<div class="t" style="left:1533px;top:923.84px;font-size:12px;color:#1b1b1b;">No</div>
<div class="t" style="left:1592px;top:923.84px;font-size:12px;color:#1b1b1b;">Nc</div>
<div class="t" style="left:1481px;top:964.84px;font-size:12px;color:#1b1b1b;">Sì</div>
<div class="t" style="left:1533px;top:964.84px;font-size:12px;color:#1b1b1b;">No</div>
<div class="t" style="left:1592px;top:964.84px;font-size:12px;color:#1b1b1b;">Nc</div>
<div class="t" style="left:1481px;top:1012.34px;font-size:12px;color:#1b1b1b;">Sì</div>
<div class="t" style="left:1533px;top:1012.34px;font-size:12px;color:#1b1b1b;">No</div>
<div class="t" style="left:1592px;top:1012.34px;font-size:12px;color:#1b1b1b;">Nc</div>
<div class="r" style="left:1710px;top:119px;width:210px;height:22px;background:#f0f0f0"></div>
<div class="r" style="left:1710px;top:119px;width:70px;height:23px;background:#fff"></div>
<div class="r" style="left:1780px;top:121px;width:42px;height:20px;background:#f0f0f0;border:1px solid #d9d9d9;border-bottom:none"></div>
<div class="r" style="left:1822px;top:121px;width:40px;height:20px;background:#f0f0f0;border:1px solid #d9d9d9;border-bottom:none"></div>
<div class="r" style="left:1710px;top:141px;width:210px;height:876px;background:#fff"></div>
<div class="r" style="left:1712px;top:142px;width:203px;height:151px;background:linear-gradient(#a1bcdb,#b1cfed)"></div>
<svg class="r" style="left:1715px;top:164px" width="45" height="46" viewBox="0 0 45 46"><rect x="6.8" y="7.5" width="36" height="36.5" rx="2" fill="#1e88e5"/><rect x="6.8" y="7.5" width="36" height="7" rx="2" fill="#1565c0"/><rect x="35" y="5.5" width="3" height="7" rx="1.5" fill="#4fc3f7"/><rect x="11.0" y="21.0" width="4" height="4" fill="#fff"/><rect x="18.9" y="21.0" width="4" height="4" fill="#fff"/><rect x="26.8" y="21.0" width="4" height="4" fill="#fff"/><rect x="34.7" y="21.0" width="4" height="4" fill="#fff"/><rect x="11.0" y="27.8" width="4" height="4" fill="#fff"/><rect x="18.9" y="27.8" width="4" height="4" fill="#fff"/><rect x="26.8" y="27.8" width="4" height="4" fill="#fff"/><rect x="34.7" y="27.8" width="4" height="4" fill="#fff"/><rect x="11.0" y="34.6" width="4" height="4" fill="#fff"/><rect x="18.9" y="34.6" width="4" height="4" fill="#fff"/><rect x="26.8" y="34.6" width="4" height="4" fill="#fff"/><circle cx="12.7" cy="13.6" r="10.5" fill="#ececec" stroke="#7a7a7a" stroke-width="1.6"/><path d="M6.5 11.3L12.7 13.8L17.5 9.6" stroke="#111" stroke-width="1.4" fill="none"/><circle cx="12.7" cy="13.8" r="1.2" fill="#111"/></svg>
<div class="r" style="left:1712px;top:234px;width:43px;height:46px;background:#cdebfa;border:1px solid #a9c6e0"></div>
<svg class="r" style="left:1726px;top:249px" width="15" height="15" viewBox="0 0 15 15"><path d="M2 7A5.5 5.5 0 0 1 12 4.5" stroke="#1a82d0" stroke-width="1.5" fill="none"/><path d="M13 1.5V5.5H9" stroke="#1a82d0" stroke-width="1.5" fill="none"/><path d="M13 8A5.5 5.5 0 0 1 3 10.5" stroke="#1a82d0" stroke-width="1.5" fill="none"/><path d="M2 13.5V9.5H6" stroke="#1a82d0" stroke-width="1.5" fill="none"/></svg>
<div class="r" style="left:1756px;top:234px;width:114px;height:41px;background:#fff;border:1px solid #7a7a7a"></div>
<svg class="r" style="left:1856px;top:252px" width="9" height="6" viewBox="0 0 9 6"><path d="M0.5 0.5L4.5 4.5L8.5 0.5" stroke="#555" stroke-width="1.1" fill="none"/></svg>
<div class="r" style="left:1871px;top:234px;width:43px;height:46px;background:#cdebfa;border:1px solid #a9c6e0"></div>
<svg class="r" style="left:1874px;top:249px" width="16" height="16" viewBox="0 0 16 16"><circle cx="8" cy="8" r="7.5" fill="#e0141e"/><path d="M5 5L11 11M11 5L5 11" stroke="#fff" stroke-width="1.6"/></svg>
<svg class="r" style="left:1898px;top:255px" width="5" height="8" viewBox="0 0 5 8"><path d="M0 0L5 4L0 8Z" fill="#000"/></svg>
<div class="r" style="left:1712px;top:293px;width:203px;height:32px;background:#b2d1ef"></div>
<div class="r" style="left:1819px;top:293px;width:96px;height:32px;background:#a3bcda;border-bottom:1px solid #8aa2bf"></div>
<div class="r" style="left:1714px;top:295px;width:104px;height:3px;background:#1f7fc0;border-radius:2px"></div>
<svg class="r" style="left:1714px;top:303px" width="16" height="16" viewBox="0 0 16 16"><rect x="0.5" y="3.5" width="15" height="12" rx="1" fill="#f5c86a" stroke="#c8964a"/><rect x="5" y="1" width="6" height="3" fill="none" stroke="#c8964a"/><path d="M0.5 9H15.5" stroke="#c8964a"/></svg>
<div class="r" style="left:1883px;top:302px;width:15px;height:16px;background:#ececec;border:1px solid #c8c8c8"></div>
<svg class="r" style="left:1886px;top:308px" width="9" height="5" viewBox="0 0 9 5"><path d="M0 0H9L4.5 5Z" fill="#000"/></svg>
<div class="r" style="left:1899px;top:302px;width:15px;height:16px;background:#ececec;border:1px solid #c8c8c8"></div>
<svg class="r" style="left:1904px;top:306px" width="5" height="9" viewBox="0 0 5 9"><path d="M0 0L5 4.5L0 9Z" fill="#000"/></svg>
<div class="r" style="left:1712px;top:325px;width:203px;height:27px;background:#b2d1ef"></div>
<div class="r" style="left:1714px;top:330px;width:200px;height:20px;background:#d3f5fe;border:1px solid #6c8ebf"></div>
<svg class="r" style="left:1901px;top:338px" width="9" height="5" viewBox="0 0 9 5"><path d="M0 0H9L4.5 5Z" fill="#000"/></svg>
<div class="r" style="left:1712px;top:350px;width:203px;height:24px;background:linear-gradient(#a9c8e9,#b9d8f5)"></div>
<svg class="r" style="left:1770px;top:356px" width="15" height="11" viewBox="0 0 15 11"><path d="M1 1H14" stroke="#555" stroke-width="1.6"/><path d="M7.5 2L14 10H1Z" fill="#ddd" stroke="#777"/></svg>
<svg class="r" style="left:1801px;top:356px" width="15" height="11" viewBox="0 0 15 11"><path d="M1 10H14" stroke="#777" stroke-width="1.6"/><path d="M7.5 9L14 1H1Z" fill="#ddd" stroke="#999"/></svg>
<svg class="r" style="left:1833px;top:357px" width="6" height="9" viewBox="0 0 6 9"><path d="M6 0L0 4.5L6 9Z" fill="#000"/></svg>
<svg class="r" style="left:1844px;top:357px" width="6" height="9" viewBox="0 0 6 9"><path d="M0 0L6 4.5L0 9Z" fill="#000"/></svg>
<svg class="r" style="left:1868px;top:354px" width="16" height="16" viewBox="0 0 16 16"><rect x="0.5" y="0.5" width="15" height="15" fill="#fff" stroke="#333" stroke-width="1.3"/><path d="M3 3L13 13M13 3L3 13" stroke="#555" stroke-width="3"/></svg>
<svg class="r" style="left:1900px;top:356px" width="14" height="12" viewBox="0 0 14 12"><rect x="3" y="0.5" width="8" height="3" fill="#fff" stroke="#555"/><rect x="0.5" y="3.5" width="13" height="5" fill="#fff" stroke="#555"/><rect x="3" y="7.5" width="8" height="4" fill="#fff" stroke="#555"/></svg>
<div class="r" style="left:1712px;top:374px;width:203px;height:18px;background:#fcfcfc"></div>
<div class="r" style="left:1791px;top:374px;width:1px;height:37px;background:#e4e4e4"></div>
<div class="r" style="left:1871px;top:374px;width:1px;height:37px;background:#e4e4e4"></div>
<div class="r" style="left:1712px;top:392px;width:79px;height:19px;background:#7b7b5f"></div>
<div class="r" style="left:1792px;top:392px;width:79px;height:19px;background:#e3e0c8"></div>
<div class="r" style="left:1872px;top:392px;width:43px;height:19px;background:#e3e0c8"></div>
<div class="r" style="left:1712px;top:411px;width:203px;height:546px;background:#fffff6"></div>
<div class="r" style="left:1712px;top:957px;width:203px;height:16px;background:#f0f0f0"></div>
<div class="r" style="left:1729px;top:958px;width:57px;height:14px;background:#c8c8c8"></div>
<svg class="r" style="left:1717px;top:961px" width="7" height="9" viewBox="0 0 7 9"><path d="M6 1L2 4.5L6 8" stroke="#444" stroke-width="1.6" fill="none"/></svg>
<svg class="r" style="left:1903px;top:961px" width="7" height="9" viewBox="0 0 7 9"><path d="M1 1L5 4.5L1 8" stroke="#444" stroke-width="1.6" fill="none"/></svg>
<div class="r" style="left:1712px;top:973px;width:203px;height:2px;background:#a8c8e8"></div>
<div class="r" style="left:1712px;top:975px;width:203px;height:32px;background:#fff"></div>
<div class="r" style="left:1712px;top:1007px;width:203px;height:5px;background:#a9cbee"></div>
<div class="r" style="left:1915px;top:141px;width:2px;height:876px;background:#f4f4f4;border-left:1px solid #d8d8d8"></div>
<div class="t" style="left:1717px;top:128.84px;font-size:12px;color:#111;letter-spacing:-1.036px;">Primo Piano</div>
<div class="t" style="left:1785px;top:129.84px;font-size:12px;color:#111;letter-spacing:-0.714px;">Attività</div>
<div class="t" style="left:1828px;top:129.84px;font-size:12px;color:#111;letter-spacing:-1.115px;">Chat</div>
<div class="t" style="left:1770px;top:160.96px;font-size:16px;font-weight:bold;letter-spacing:0.020px;">Scadenze</div>
<div class="t" style="left:1769px;top:179.50px;font-size:13px;color:#111;letter-spacing:-0.032px;">Le scadenze in primo</div>
<div class="t" style="left:1769px;top:195.00px;font-size:13px;color:#111;letter-spacing:-0.188px;">piano per oggi</div>
<div class="t" style="left:1758px;top:253.78px;font-size:16.5px;font-weight:bold;letter-spacing:-0.337px;">02/01/2026</div>
<div class="t" style="left:1736px;top:310.34px;font-size:12px;font-weight:bold;color:#111;letter-spacing:-0.264px;">Pagamenti (1)</div>
<div class="t" style="left:1827px;top:308.84px;font-size:12px;color:#111;letter-spacing:0.397px;">Ordini</div>
<div class="t" style="left:1878px;top:308.84px;font-size:12px;color:#111;">F</div>
<div class="t" style="left:1718px;top:340.34px;font-size:12px;color:#111;letter-spacing:-0.541px;">( Tutte )</div>
<div class="t" style="left:1757px;top:361.04px;font-size:10px;color:#333;">1</div>
<div class="t" style="left:1754px;top:382.84px;font-size:12px;color:#222;letter-spacing:-1.112px;">Importo</div>
<div class="t" style="left:1795.5px;top:382.84px;font-size:12px;color:#222;letter-spacing:-0.766px;">Scadenza</div>
<div class="t" style="left:1875px;top:382.84px;font-size:12px;color:#222;letter-spacing:-0.891px;">Cli/For</div>
<div class="t" style="left:1758px;top:400.96px;font-size:16px;color:#f4f0dc;letter-spacing:-0.391px;">6,10</div>
<div style="position:absolute;left:1792px;top:392px;width:79px;height:19px;overflow:hidden"><div class="t" style="left:2.6px;top:8.96px;font-size:16px;color:#111;letter-spacing:0px">30/04/2023</div></div>
<div style="position:absolute;left:1872px;top:392px;width:43px;height:19px;overflow:hidden"><div class="t" style="left:2.6px;top:8.96px;font-size:16px;color:#111;letter-spacing:0px">ESPLORA</div></div>
<div class="t" style="left:1712.5px;top:982.80px;font-size:12px;font-family:'Liberation Mono', monospace;font-weight:bold;color:#1e8a2e;letter-spacing:0.513px;">Attive:</div>
<div class="t" style="left:1814.5px;top:982.80px;font-size:12px;font-family:'Liberation Mono', monospace;font-weight:bold;color:#8b1a4a;letter-spacing:0.554px;">Passive:</div>
<div class="t" style="left:1721px;top:998.80px;font-size:12px;font-family:'Liberation Mono', monospace;font-weight:bold;color:#1e8a2e;letter-spacing:0.562px;">6,10</div>
<div class="t" style="left:1830.5px;top:998.80px;font-size:12px;font-family:'Liberation Mono', monospace;font-weight:bold;color:#8b1a4a;letter-spacing:0.562px;">0,00</div>
<div class="r" style="left:0px;top:1017px;width:1920px;height:1px;background:#d7d7d7;z-index:5"></div>
<div class="r" style="left:0px;top:1018px;width:1920px;height:21px;background:#f0f0f0;z-index:5"></div>
<div class="r" style="left:706px;top:1019px;width:1px;height:20px;background:#d9d9d9;z-index:6"></div>
<div class="r" style="left:728px;top:1019px;width:1px;height:20px;background:#d9d9d9;z-index:6"></div>
<div class="r" style="left:750px;top:1019px;width:1px;height:20px;background:#d9d9d9;z-index:6"></div>
<div class="r" style="left:902px;top:1019px;width:1px;height:20px;background:#d9d9d9;z-index:6"></div>
<div class="r" style="left:1118px;top:1019px;width:1px;height:20px;background:#d9d9d9;z-index:6"></div>
<div class="r" style="left:1261px;top:1019px;width:1px;height:20px;background:#d9d9d9;z-index:6"></div>
<div class="r" style="left:1478px;top:1019px;width:1px;height:20px;background:#d9d9d9;z-index:6"></div>
<div class="r" style="left:1550px;top:1019px;width:1px;height:20px;background:#d9d9d9;z-index:6"></div>
<div class="r" style="left:1622px;top:1019px;width:1px;height:20px;background:#d9d9d9;z-index:6"></div>
<div class="r" style="left:1839px;top:1019px;width:1px;height:20px;background:#d9d9d9;z-index:6"></div>
<div class="r" style="left:1861px;top:1019px;width:1px;height:20px;background:#d9d9d9;z-index:6"></div>
<div class="r" style="left:1883px;top:1019px;width:1px;height:20px;background:#d9d9d9;z-index:6"></div>
<div style="position:absolute;left:0;top:0;z-index:7">
<svg class="r" style="left:912px;top:1024px" width="15" height="15" viewBox="0 0 15 15"><circle cx="7.5" cy="7.5" r="6.5" fill="#e8f4fc" stroke="#4a9ad8" stroke-width="1.3"/><path d="M3.5 9V7A4 4 0 0 1 11.5 7V9" stroke="#333" stroke-width="1.2" fill="none"/><rect x="2.5" y="8" width="2.5" height="4" fill="#333"/><rect x="10" y="8" width="2.5" height="4" fill="#333"/></svg>
<div class="t" style="left:931px;top:1028.34px;font-size:12px;color:#0000ee;text-decoration:underline;letter-spacing:-0.897px;">Assistenza Remota</div>
<div class="t" style="left:1125px;top:1028.84px;font-size:12px;color:#111;letter-spacing:-0.454px;">GDI: 2196/16000</div>
<div class="t" style="left:1267px;top:1028.84px;font-size:12px;color:#111;letter-spacing:-0.001px;">Utente: wincat</div>
<div class="t" style="left:1483px;top:1028.84px;font-size:12px;color:#111;letter-spacing:-0.574px;">v3.9.130</div>
<div class="t" style="left:1555px;top:1028.84px;font-size:12px;color:#111;letter-spacing:-0.226px;">02/01/2026</div>
<div class="t" style="left:1627px;top:1028.84px;font-size:12px;color:#111;letter-spacing:0.096px;">e:\develop\catgest\exe39\</div>
<svg class="r" style="left:1842px;top:1023px" width="15" height="13" viewBox="0 0 15 13"><rect x="0.5" y="0.5" width="14" height="12" fill="#fff" stroke="#333"/><rect x="0.5" y="0.5" width="14" height="3" fill="#1a2a8a"/></svg>
<svg class="r" style="left:1866px;top:1022px" width="14" height="15" viewBox="0 0 14 15"><path d="M3 7V4.5A4 4 0 0 1 11 4.5V7" stroke="#ccc" stroke-width="2" fill="none"/><rect x="1" y="7" width="12" height="8" rx="2" fill="#ddd"/></svg>
<svg class="r" style="left:1886px;top:1023px" width="17" height="14" viewBox="0 0 17 14"><rect x="1" y="0.5" width="15" height="4" fill="#ddd" stroke="#333"/><rect x="1" y="5" width="15" height="4" fill="#ddd" stroke="#333"/><path d="M8.5 9V12M1 12.5H16" stroke="#333" stroke-width="1.3"/><rect x="7" y="11" width="3" height="2" fill="#c8b020"/></svg>
</div>
</body></html>
